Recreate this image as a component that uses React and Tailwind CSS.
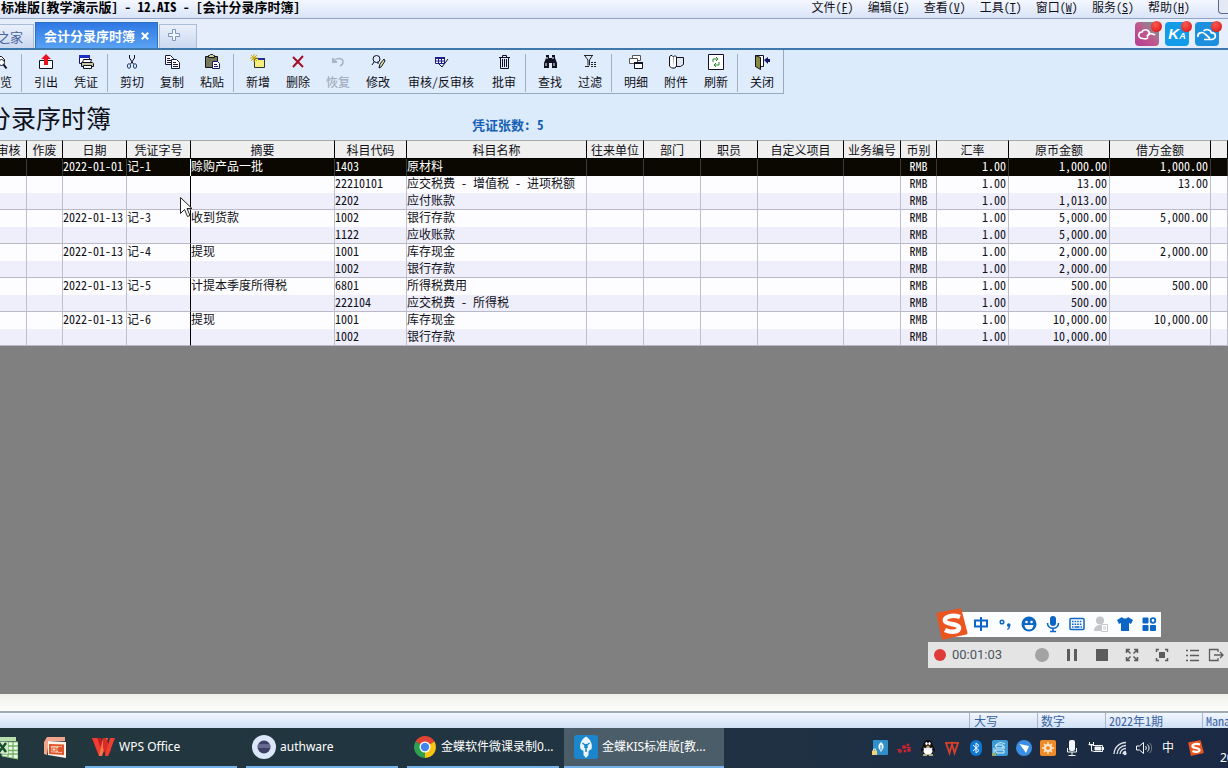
import { clsx } from 'clsx';

const menus = [
  { label: '文件', hot: 'F' },
  { label: '编辑', hot: 'E' },
  { label: '查看', hot: 'V' },
  { label: '工具', hot: 'T' },
  { label: '窗口', hot: 'W' },
  { label: '服务', hot: 'S' },
  { label: '帮助', hot: 'H' },
];

const K = '#111122';

// Toolbar glyphs, all drawn on a 16x16 grid
const glyphs = {
  preview: (
    <g fill="none" stroke={K}>
      <path d="M3.5 14.5v-12h6l3 3v2" fill="#fff" />
      <circle cx="9.5" cy="8.5" r="3" fill="#fff" />
      <path d="M11.5 10.5l3 4" strokeWidth="2" />
    </g>
  ),
  exportOut: (
    <g>
      <path d="M1.5 6.5h13v8h-13z" fill="#fff" stroke={K} />
      <path d="M8 0l5 5h-3v6H6V5H3z" fill="#e8141c" />
    </g>
  ),
  voucher: (
    <g>
      <path d="M1.5 1.5h10v8h-10z" fill="#fff" stroke="#10107a" />
      <path d="M1 1h11v3H1z" fill="#1c2fc0" />
      <path d="M5.5 5.5h8l-1 3h-8z" fill="#fff" stroke={K} />
      <path d="M3.5 8.5h11l1 1v3h-12z" fill="#c9c9a0" stroke={K} />
      <path d="M5.5 11.5h8v3h-8z" fill="#fff" stroke={K} />
    </g>
  ),
  cut: (
    <g fill="none" stroke="#1d3a6e">
      <path d="M5.5 1v3l4 6M10.5 1v3l-4 6" stroke={K} />
      <ellipse cx="5" cy="12" rx="1.6" ry="2.3" />
      <ellipse cx="11" cy="12" rx="1.6" ry="2.3" />
    </g>
  ),
  copy: (
    <g fill="#fff" stroke="#1a1a40">
      <path d="M1.5 1.5h5l3 3v6h-8z" />
      <path d="M3 4.5h3M3 6.5h4M3 8.5h4" />
      <path d="M7.5 5.5h5l3 3v6h-8z" />
      <path d="M9 8.5h3M9 10.5h5M9 12.5h5" />
    </g>
  ),
  paste: (
    <g stroke={K}>
      <path d="M1.5 2.5h12v11h-12z" fill="#77775a" />
      <path d="M4.5 3.5v-2h1l1-1h2l1 1h1v2z" fill="#d8d68a" />
      <path d="M8.5 7.5h5l2 2v5h-7z" fill="#fff" stroke="#1a1a60" />
      <path d="M10 10.5h3M10 12.5h4" stroke="#1a1a60" />
    </g>
  ),
  add: (
    <g>
      <path d="M4.5 4.5h10v9h-10z" fill="#f6ee7a" stroke="#333" />
      <path d="M8 4h7v2H8z" fill="#1c2f9a" />
      <path d="M4 0v8M0 4h8M1 1l6 6M7 1L1 7" stroke="#c9a900" />
    </g>
  ),
  remove: <path d="M3 3l10 10M13 2L3 13" stroke="#a01028" strokeWidth="2" />,
  undo: (
    <g fill="none" stroke="#a9b4c0">
      <path d="M3 4v4h4" strokeWidth="2" />
      <path d="M4 7c3-4 9-3 9 1 0 2-1 3-3 4" strokeWidth="1.5" />
    </g>
  ),
  edit: (
    <g fill="none" stroke={K}>
      <circle cx="6.5" cy="5" r="3.5" />
      <path d="M4 8l-2 3M8 8v2" />
      <path d="M9 14l1-4 4-5 1 2-4 6z" fill="#e8e4a0" />
    </g>
  ),
  audit: (
    <g>
      <path d="M2.5 3.5h9v6h-9z" fill="#fff" stroke="#1c1c8a" />
      <path d="M2 4h10" stroke="#1c1c8a" strokeWidth="2" />
      <path d="M2 7h10M5.5 4v6M8.5 4v6" stroke="#1c1c8a" />
      <path d="M6 10l3 3 6-8" stroke={K} fill="none" />
    </g>
  ),
  trash: (
    <g fill="none" stroke={K}>
      <path d="M3 3.5h11M6.5 3v-1.5h4V3M4.500 4v10.500h8V4" />
      <path d="M6.5 5v8M8.5 5v8M10.5 5v8" />
    </g>
  ),
  find: (
    <g fill={K}>
      <path d="M4 1h3v3h3V1h3v3l2 5v5h-5V9H7v5H2V9l2-5z" />
      <path d="M4 9v3M12 9v3M5 3v2M11 3v2" stroke="#fff" />
    </g>
  ),
  filter: (
    <g fill="none" stroke="#222">
      <path d="M2 1.5h9M3 2l3 4v5.500M10 2L7.500 6v5.500M3 12.500h4" />
      <path d="M9 8.5h6M9 10.5h6M9 12.5h6" strokeDasharray="2 1" />
    </g>
  ),
  detail: (
    <g stroke={K} fill="#fff">
      <path d="M4.5 1.5h8v5h-8z" stroke="#555" />
      <path d="M1.5 4.5h8v5h-8z" stroke="#555" />
      <path d="M6.5 8.5h8v6h-8z" />
      <path d="M6 9h9" strokeWidth="2" />
    </g>
  ),
  attach: (
    <g fill="none" stroke={K}>
      <path d="M5 3.5h10.500v7l-3 2H6" fill="#dfe6ee" />
      <path d="M1.5 3v9l2 2h2V3L4 1.500H2.500z" fill="#fff" />
      <path d="M5.500 3l1.500-1.500L8.500 3v9l-1.500 2h-2" fill="#fff" />
    </g>
  ),
  refresh: (
    <g fill="none">
      <path d="M.5.5h15v15H.5z" fill="#fff" stroke={K} />
      <path d="M5 8V5h5M8 3l2 2-2 2M11 8v3H6M8 9l-2 2 2 2" stroke="#2b8a2b" />
    </g>
  ),
  close: (
    <g>
      <path d="M1.5 1.5h8v11h-8z" fill="#fff" stroke={K} />
      <path d="M1.5 1.5l5 2v12l-5-3z" fill="#8a8a3c" stroke={K} />
      <path d="M10 6l4-3v2h2v3h-2v2z" fill="#14146e" />
    </g>
  ),
};

const toolGroups = [
  [{ label: '预览', icon: 'preview' }],
  [
    { label: '引出', icon: 'exportOut' },
    { label: '凭证', icon: 'voucher' },
  ],
  [
    { label: '剪切', icon: 'cut' },
    { label: '复制', icon: 'copy' },
    { label: '粘贴', icon: 'paste' },
  ],
  [
    { label: '新增', icon: 'add' },
    { label: '删除', icon: 'remove' },
    { label: '恢复', icon: 'undo', disabled: true },
    { label: '修改', icon: 'edit' },
    { label: '审核/反审核', icon: 'audit', wide: true },
    { label: '批审', icon: 'trash' },
  ],
  [
    { label: '查找', icon: 'find' },
    { label: '过滤', icon: 'filter' },
  ],
  [
    { label: '明细', icon: 'detail' },
    { label: '附件', icon: 'attach' },
    { label: '刷新', icon: 'refresh' },
  ],
  [{ label: '关闭', icon: 'close' }],
];

const columns = [
  { key: 'audit', label: '审核', width: 'w-9' },
  { key: 'void', label: '作废', width: 'w-9' },
  { key: 'date', label: '日期', width: 'w-16' },
  { key: 'no', label: '凭证字号', width: 'w-16' },
  { key: 'memo', label: '摘要', width: 'w-36' },
  { key: 'code', label: '科目代码', width: 'w-18' },
  { key: 'name', label: '科目名称', width: 'w-45' },
  { key: 'partner', label: '往来单位', width: 'w-[57px]' },
  { key: 'dept', label: '部门', width: 'w-[57px]' },
  { key: 'staff', label: '职员', width: 'w-[57px]' },
  { key: 'custom', label: '自定义项目', width: 'w-[86px]' },
  { key: 'biz', label: '业务编号', width: 'w-[57px]' },
  { key: 'currency', label: '币别', width: 'w-9', align: 'text-center' },
  { key: 'rate', label: '汇率', width: 'w-18', align: 'text-right' },
  { key: 'amount', label: '原币金额', width: 'w-[101px]', align: 'text-right' },
  { key: 'debit', label: '借方金额', width: 'w-[101px]', align: 'text-right' },
  { key: 'credit', label: '', width: '' },
];

const entries = [
  { date: '2022-01-01', no: '记-1', memo: '赊购产品一批', code: '1403', name: '原材料', amount: '1,000.00', debit: '1,000.00', selected: true },
  { code: '22210101', name: '应交税费 - 增值税 - 进项税额', amount: '13.00', debit: '13.00' },
  { code: '2202', name: '应付账款', amount: '1,013.00', last: true },
  { date: '2022-01-13', no: '记-3', memo: '收到货款', code: '1002', name: '银行存款', amount: '5,000.00', debit: '5,000.00' },
  { code: '1122', name: '应收账款', amount: '5,000.00', last: true },
  { date: '2022-01-13', no: '记-4', memo: '提现', code: '1001', name: '库存现金', amount: '2,000.00', debit: '2,000.00' },
  { code: '1002', name: '银行存款', amount: '2,000.00', last: true },
  { date: '2022-01-13', no: '记-5', memo: '计提本季度所得税', code: '6801', name: '所得税费用', amount: '500.00', debit: '500.00' },
  { code: '222104', name: '应交税费 - 所得税', amount: '500.00', last: true },
  { date: '2022-01-13', no: '记-6', memo: '提现', code: '1001', name: '库存现金', amount: '10,000.00', debit: '10,000.00' },
  { code: '1002', name: '银行存款', amount: '10,000.00', last: true },
].map((row) => ({ currency: 'RMB', rate: '1.00', ...row }));

const MenuBar = () => (
  <header className="flex h-[18px] items-start justify-between bg-gradient-to-b from-[#f4f7fe] to-[#d9e4f8]">
    <h1 className="whitespace-nowrap pl-px text-[13px] leading-[14px] font-bold text-black">
      标准版[教学演示版] - 12.AIS - [会计分录序时簿]
    </h1>
    <div className="flex items-start">
      <nav className="flex gap-3.5">
        {menus.map((m) => (
          <button key={m.hot} type="button" className="whitespace-nowrap leading-[14px]">
            {m.label}(<span className="underline">{m.hot}</span>)
          </button>
        ))}
      </nav>
      <button
        type="button"
        aria-label="最小化"
        className="ml-7 h-3.5 w-2.5 rounded-bl border-b border-l border-[#5a6a8a] bg-[#e4e9f3]"
      />
    </div>
  </header>
);

const RedDot = () => (
  <span className="absolute -top-px -right-[3px] size-[11px] rounded-full bg-radial-[at_40%_30%] from-[#ff5a50] to-[#cf0f14]" />
);

const TabStrip = () => (
  <div className="flex h-8 items-end justify-between border-t border-b-2 border-t-[#8fa3c4] border-b-[#3f78ad] bg-[#e6eefb]">
    <div className="flex items-end">
      <button
        type="button"
        className="flex h-6 w-[34px] items-center justify-end border-t border-r border-[#a9bcd8] bg-gradient-to-b from-[#eaf0fb] to-[#cbd8f0] pr-2.5 text-[13px] whitespace-nowrap text-[#48649c]"
      >
        之家
      </button>
      <div className="ml-px flex h-[26px] w-[123px] items-center justify-between border border-b-0 border-[#2f6fc0] bg-gradient-to-b from-[#2f78e4] to-[#5aa2f2] pr-2 pl-2 text-white">
        <button type="button" className="whitespace-nowrap text-[13px] font-bold">会计分录序时簿</button>
        <button type="button" aria-label="关闭标签">
          <svg viewBox="0 0 10 10" className="size-2" stroke="#fff" strokeWidth="2.400">
            <path d="M1 1l8 8M9 1L1 9" />
          </svg>
        </button>
      </div>
      <button
        type="button"
        aria-label="新标签"
        className="ml-px flex h-6 w-[38px] items-center border border-b-0 border-[#a9bcd8] bg-gradient-to-b from-[#eaf0fb] to-[#cbd8f0] pb-1 pl-2"
      >
        <svg viewBox="0 0 12 12" className="size-3" fill="#f4f7fd" stroke="#7b95bd">
          <path d="M4.5.5h3v4h4v3h-4v4h-3v-4h-4v-3h4z" />
        </svg>
      </button>
    </div>
    <div className="flex gap-1.5 self-center pr-[9px]">
      <button type="button" aria-label="云社区" className="relative size-6 rounded bg-gradient-to-tr from-[#b23c92] via-[#c0588e] to-[#3d9a90]">
        <svg viewBox="0 0 24 24" className="size-6" fill="none" stroke="#fff" strokeWidth="1.700">
          <path d="M13 15.500c-1 1.500-3 1.500-5 1-3 0-5-2-4-4 0-2 2-2.500 3-2.500 1-3 6-3 7 0 1 2-1 4-2 5M12 14c2-3 5-3 8-1" />
        </svg>
        <RedDot />
      </button>
      <button
        type="button"
        className="relative flex size-6 items-center justify-center rounded bg-[#129be6] font-['Liberation_Sans',sans-serif] text-[15px] font-bold text-white italic [font-feature-settings:normal]"
      >
        K<span className="pt-1 text-[9px]">A</span>
        <RedDot />
      </button>
      <button type="button" aria-label="云服务" className="relative size-6 rounded bg-[#1c90dc]">
        <svg viewBox="0 0 24 24" className="size-6" fill="none" stroke="#fff" strokeWidth="1.700">
          <path d="M3 15c-1-4 4-6 7-3l5 4.500M9 17.500h8c5-1 4-7-.5-6.500-1-4-6-4-8-2" />
        </svg>
        <RedDot />
      </button>
    </div>
  </div>
);

const Toolbar = () => (
  <div className="flex">
    <div className="-ml-5 flex h-11 border-r border-b border-[#97a9bd] bg-[#dfecfb] pr-px">
      {toolGroups.map((group, i) => (
        <div key={group[0].label} className="flex">
          {i > 0 && <span className="mt-1 mr-1 mb-px ml-px w-px bg-[#9fb0c4]" />}
          {group.map((tool) => (
            <button
              key={tool.label}
              type="button"
              disabled={tool.disabled}
              className={clsx(
                'flex flex-col items-center gap-1 whitespace-nowrap pt-1',
                tool.wide ? 'w-[86px]' : 'w-10',
                tool.disabled && 'text-[#9aa6b4]'
              )}
            >
              <svg viewBox="0 0 16 16" className="size-4">{glyphs[tool.icon]}</svg>
              <span className="leading-4">{tool.label}</span>
            </button>
          ))}
        </div>
      ))}
    </div>
  </div>
);

const EntryTable = () => (
  <div className="relative">
    <div className="-ml-[9px]">
      <table className="w-full table-fixed border-separate border-spacing-0">
        <thead>
          <tr>
            {columns.map((col) => (
              <th
                key={col.key}
                scope="col"
                className={clsx(
                  'h-[19px] border-t border-r border-b border-t-[#a9a9a9] border-r-black border-b-black bg-[#efefef] p-0 leading-4 font-normal whitespace-nowrap',
                  col.width
                )}
              >
                {col.label}
              </th>
            ))}
          </tr>
        </thead>
        <tbody>
          {entries.map((row, i) => (
            <tr
              key={i}
              className={row.selected ? 'bg-[#0a0800] text-white' : row.last ? 'bg-[#efeffc]' : 'bg-[#fdfdff]'}
            >
              {columns.map((col) => (
                <td
                  key={col.key}
                  className={clsx(
                    'h-[17px] border-r p-0 align-top leading-[14px] whitespace-nowrap',
                    col.align === 'text-right' && 'pr-0.5',
                    col.align,
                    row.last && 'border-b border-b-[#b9b9c9]',
                    col.key === 'no'
                      ? row.selected ? 'border-r-white' : 'border-r-black'
                      : row.selected ? 'border-r-[#3a3a34]' : 'border-r-[#c0c0cc]'
                  )}
                >
                  {row[col.key]}
                </td>
              ))}
            </tr>
          ))}
        </tbody>
      </table>
    </div>
    <svg viewBox="0 0 12 21" className="absolute top-[57px] left-[180px] h-[21px] w-3">
      <path d="M.5.5v16l4-4 3 7 2.500-1-3-7h5z" fill="#fff" stroke="#222" />
    </svg>
  </div>
);

const imeKeys = [
  { label: '中文', art: <path d="M3 5.500h12v6H3zM9 2v14" fill="none" stroke="#0c66c6" strokeWidth="2" /> },
  {
    label: '标点',
    art: (
      <g>
        <circle cx="6" cy="7" r="1.800" fill="none" stroke="#0c66c6" strokeWidth="1.500" />
        <path d="M11 10a1.800 1.800 0 1 1 3 1.500c0 2-1 3-2.500 3.500l-.5-1c1-.5 1.500-1 1.500-2-1 0-1.500-1-1.500-2z" fill="#0c66c6" />
      </g>
    ),
  },
  {
    label: '表情',
    art: (
      <g>
        <circle cx="9" cy="9" r="7.500" fill="#0c66c6" />
        <circle cx="6.500" cy="7" r="1.300" fill="#fff" />
        <circle cx="11.500" cy="7" r="1.300" fill="#fff" />
        <path d="M4.500 10h9a4.500 4.500 0 0 1-9 0z" fill="#fff" />
      </g>
    ),
  },
  {
    label: '语音',
    art: (
      <g>
        <rect x="6" y="1" width="6" height="10" rx="3" fill="#0c66c6" />
        <path d="M3.500 8c0 7 11 7 11 0M9 13v3.500M6 16.500h6" fill="none" stroke="#0c66c6" strokeWidth="1.600" />
      </g>
    ),
  },
  {
    label: '软键盘',
    art: (
      <g>
        <rect x="2" y="3.500" width="14" height="11" rx="1" fill="#fff" stroke="#0c66c6" strokeWidth="1.500" />
        <path d="M4 6.500h10M4 9.200h10" stroke="#0c66c6" strokeWidth="1.500" strokeDasharray="1.600 1" />
        <path d="M4 12h1.500M6.500 12h5M12.500 12H14" stroke="#0c66c6" strokeWidth="1.500" />
      </g>
    ),
  },
  {
    label: '用户',
    art: (
      <g fill="#c4c6ca">
        <circle cx="8" cy="5.500" r="4" />
        <path d="M2 16c0-8 12-8 12 0z" />
        <path d="M9.500 9.500h6v7h-6z" fill="#fff" stroke="#c4c6ca" />
        <path d="M11 12h3M11 14h3" stroke="#c4c6ca" />
      </g>
    ),
  },
  { label: '皮肤', art: <path d="M1 5l5-3c1 2 5 2 6 0l5 3-2 4-2-1v8H5V8L3 9z" fill="#0c66c6" /> },
  {
    label: '工具箱',
    art: (
      <g fill="#0c66c6">
        <rect x="2.500" y="2.500" width="6" height="6" rx="1" />
        <circle cx="13" cy="5.500" r="2.300" fill="none" stroke="#0c66c6" strokeWidth="1.800" />
        <rect x="2.500" y="10" width="6" height="6" rx="1" />
        <rect x="10" y="10" width="6" height="6" rx="1" />
      </g>
    ),
  },
];

const SogouMark = ({ className }) => (
  <svg viewBox="0 0 32 32" className={className}>
    <path d="M2 6L24 2l6 23-23 5z" fill="#ea5520" stroke="#ea5520" strokeWidth="3" strokeLinejoin="round" />
    <path d="M24 9C16 6 8 9 9 13c1 4 14 2 14 7 0 4-8 5-14 2" fill="none" stroke="#fff" strokeWidth="4.500" />
  </svg>
);

const ImeBar = () => (
  <div className="flex items-center">
    <SogouMark className="z-10 -mr-5 size-8" />
    <div className="flex h-[25px] items-center gap-1.5 bg-[#fcfdff] pr-[3px] pl-6">
      {imeKeys.map((k) => (
        <button key={k.label} type="button" aria-label={k.label}>
          <svg viewBox="0 0 18 18" className="size-[18px]">{k.art}</svg>
        </button>
      ))}
    </div>
  </div>
);

const recorderKeys = [
  { label: '录制', art: <circle cx="8" cy="8" r="7" fill="#a3a3a3" /> },
  { label: '暂停', art: <path d="M3 2h3v12H3zM10 2h3v12h-3z" fill="#5c5c5c" /> },
  { label: '停止', art: <path d="M2 2h12v12H2z" fill="#5c5c5c" /> },
  {
    label: '全屏',
    art: (
      <path
        d="M2.500 6V2.500H6M10 2.500h3.500V6M13.500 10v3.500H10M6 13.500H2.500V10M3 3l3.500 3.500M13 3L9.500 6.500M13 13L9.500 9.500M3 13l3.500-3.500"
        fill="none"
        stroke="#5c5c5c"
        strokeWidth="1.500"
      />
    ),
  },
  {
    label: '区域',
    art: (
      <g>
        <path d="M2.500 5V2.500H5M11 2.500h2.500V5M13.500 11v2.500H11M5 13.500H2.500V11" fill="none" stroke="#5c5c5c" strokeWidth="1.500" />
        <path d="M5 5h6v6H5z" fill="#5c5c5c" />
      </g>
    ),
  },
  { label: '列表', art: <path d="M2 3.500h2M6 3.500h9M2 8.500h2M6 8.500h9M2 13.500h2M6 13.500h9" stroke="#5c5c5c" strokeWidth="1.500" /> },
];

const Recorder = () => (
  <div className="flex h-[26px] w-[300px] items-center bg-[#e4e4e4] pl-1.5">
    <span className="size-3 rounded-full bg-[#dd3a38]" />
    <time className="ml-1.5 w-[76px] font-['Roboto',sans-serif] text-[13px] text-[#4b545e] [font-feature-settings:normal]">00:01:03</time>
    <div className="ml-1.5 flex items-center gap-3.5">
      {recorderKeys.map((k) => (
        <button key={k.label} type="button" aria-label={k.label}>
          <svg viewBox="0 0 16 16" className="size-4">{k.art}</svg>
        </button>
      ))}
    </div>
    <button type="button" aria-label="退出" className="ml-2">
      <svg viewBox="0 0 16 16" className="size-4" fill="none" stroke="#5c5c5c" strokeWidth="1.300">
        <path d="M10 5V2.500H1.500v11H10V11M6 8h9M12 5l3 3-3 3" />
      </svg>
    </button>
  </div>
);

const StatusBar = () => (
  <div>
    <div className="h-[17px] bg-gradient-to-b from-[#efefeb] to-[#fdfdfb]" />
    <footer className="flex h-[17px] justify-end overflow-hidden border-t-2 border-[#9fabb0] bg-gradient-to-b from-[#f2f6fe] to-[#d0e0f5] text-[#3a63a0]">
      <span className="w-17 border-l border-[#a5b7d0] pl-1 leading-4">大写</span>
      <span className="w-17 border-l border-[#a5b7d0] pl-[3px] leading-4">数字</span>
      <span className="w-[97px] border-l border-[#a5b7d0] pl-[3px] leading-4">2022年1期</span>
      <span className="w-[26px] border-l border-[#a5b7d0] pl-[3px] leading-4">Mana</span>
    </footer>
  </div>
);

const WpsMark = ({ className }) => (
  <svg viewBox="0 0 24 24" className={className}>
    <path d="M1 3h9l4 10-3 8H8z" fill="#c51d1f" />
    <path d="M1 3h5l5 13-2 5H8z" fill="#ef3e33" />
    <path d="M12 3h5l-6 18H8z" fill="#f47a45" />
    <path d="M12 3h3l5 12-3 6h-2l-3-8z" fill="#d92a25" />
    <path d="M19 3h5l-7 18h-3z" fill="#ef3e33" />
  </svg>
);

const KisMark = ({ className }) => (
  <svg viewBox="0 0 24 24" className={className}>
    <rect width="24" height="24" rx="3" fill="#1c86cc" />
    <path d="M12 1.500c-4 2.500-7 7-5.500 12.500l3 2v4l2.500 3 2.500-3v-4l3-2C19 8.500 16 4 12 1.500z" fill="#eaf5fd" />
    <path d="M12 9v8M8.500 8l2.500 2v3M15.500 8L13 10v3" stroke="#1c86cc" fill="none" strokeWidth="1.500" />
  </svg>
);

const tasks = [
  { label: 'WPS Office', art: <WpsMark className="size-6" /> },
  {
    label: 'authware',
    art: (
      <svg viewBox="0 0 24 24" className="size-6">
        <circle cx="12" cy="12" r="12" fill="#dbe7f8" />
        <circle cx="12" cy="12" r="6.500" fill="#3c3f66" />
        <path d="M6 10h12M6 12h12" stroke="#8f94bd" />
      </svg>
    ),
  },
  {
    label: '金蝶软件微课录制0...',
    art: (
      <svg viewBox="0 0 24 24" className="size-6">
        <path d="M12 12L2.500 6.500a11 11 0 0 1 19 0z" fill="#e24335" />
        <path d="M12 12l9.500-5.500A11 11 0 0 1 12 23z" fill="#f9c513" />
        <path d="M12 12v11A11 11 0 0 1 2.500 6.500z" fill="#2ea04f" />
        <path d="M12 6.500h9.500" stroke="#e24335" />
        <circle cx="12" cy="12" r="5.500" fill="#fff" />
        <circle cx="12" cy="12" r="4.200" fill="#4285e8" />
      </svg>
    ),
  },
  { label: '金蝶KIS标准版[教...', art: <KisMark className="size-6" />, active: true },
];

const tray = [
  {
    label: 'KIS',
    art: (
      <g>
        <rect x="1" width="15" height="15" rx="1" fill="#2f8fc9" />
        <path d="M9 2C7 3.500 6 5 6.500 8L9 12l2.500-4C12 5 11 3.500 9 2z" fill="#eaf5fd" />
        <path d="M9 5v5" stroke="#2f8fc9" />
        <path d="M0 10.500h5V15H0z" fill="#f0d27a" />
        <path d="M1.500 10.500V9h2v1.500" stroke="#f4ecd0" fill="none" />
      </g>
    ),
  },
  {
    label: '录屏',
    art: (
      <g fill="#c22434">
        <circle cx="4" cy="11" r="2" />
        <circle cx="8" cy="7" r="2" />
        <circle cx="12" cy="5" r="1.500" />
        <circle cx="9" cy="11" r="1.500" />
        <circle cx="13" cy="10" r="2" />
        <path d="M1 9h4v1H1zM10 7h5v1h-5z" />
      </g>
    ),
  },
  {
    label: 'QQ',
    art: (
      <g>
        <path d="M8 0c3 0 4.500 2 4.500 5 1.500 2 3 4.500 2.500 6.500l-2-1V15H3v-4.500l-2 1C.5 9.500 2 7 3.500 5 3.500 2 5 0 8 0z" fill="#0c0c10" />
        <ellipse cx="8" cy="11" rx="4.500" ry="3.800" fill="#fff" />
        <ellipse cx="6.500" cy="3.500" rx="1.200" ry="1.500" fill="#fff" />
        <ellipse cx="9.500" cy="3.500" rx="1.200" ry="1.500" fill="#fff" />
        <path d="M5 5.800h6L8 7.300z" fill="#f5a623" />
        <path d="M3.500 8c3 1.500 6 1.500 9 0" stroke="#e8e8f0" strokeWidth="1.300" fill="none" />
        <path d="M3 15h4M9 15h4" stroke="#e8d8a0" strokeWidth="1.500" />
      </g>
    ),
  },
  { label: 'WPS', art: <path d="M1 2.800h14M2 3l3.500 10L8 4l2.500 9L14 3" fill="none" stroke="#d9402c" strokeWidth="1.800" /> },
  {
    label: '蓝牙',
    art: (
      <g>
        <rect x="2" width="12" height="16" rx="6" fill="#0f78d4" />
        <path d="M5 5l6 5.500L8 13V3l3 2.500L5 11" fill="none" stroke="#fff" />
      </g>
    ),
  },
  {
    label: '网络助手',
    art: (
      <g>
        <rect width="16" height="16" rx="2" fill="#3b9ad6" />
        <path d="M3 6c3-4 7-4 10-2M4 5h7v3H4zM3 10h9v3H5zM12 6v3M2 8v5" fill="none" stroke="#dff3fc" />
        <path d="M0 13h4v3H0z" fill="#8fb06a" />
      </g>
    ),
  },
  {
    label: '钉钉',
    art: (
      <g>
        <circle cx="8" cy="8" r="8" fill="#3a8fe4" />
        <path d="M3.500 4l9.500 2-3 7-2-3z" fill="#fff" />
      </g>
    ),
  },
  {
    label: '设置',
    art: (
      <g>
        <rect width="16" height="16" rx="2" fill="#f08a24" />
        <circle cx="8" cy="8" r="3" fill="none" stroke="#fbe6cf" strokeWidth="2" />
        <path d="M8 2v2.500M8 11.500V14M2 8h2.500M11.500 8H14M4 4l1.500 1.500M10.500 10.500L12 12M12 4l-1.500 1.500M5.500 10.500L4 12" stroke="#fbe6cf" strokeWidth="1.500" />
      </g>
    ),
  },
  {
    label: '麦克风',
    art: (
      <g>
        <rect x="5" width="6" height="11" rx="2" fill="#f2f5f8" />
        <path d="M3.500 8v4h9V8M8 12v3M4.500 15.500h7" fill="none" stroke="#f2f5f8" />
      </g>
    ),
  },
  {
    label: '电源',
    art: (
      <g fill="none" stroke="#f2f5f8">
        <path d="M5 5.500h9.500v6h-9M15.500 7v3" />
        <path d="M7 7h6v3H7z" fill="#f2f5f8" />
        <path d="M1.500 2v3h4V2M.5 4.500h5M3.500 5v6h2" />
      </g>
    ),
  },
  {
    label: '无线网络',
    art: (
      <g fill="none" stroke="#dfe5ea" strokeWidth="1.300">
        <path d="M2 14A12 12 0 0 1 14 2.500M5 14a9 9 0 0 1 9-8.500M8 14a6 6 0 0 1 6-5.500M11 14a3 3 0 0 1 3-2.500" />
        <circle cx="13" cy="13.500" r="1" fill="#fff" />
      </g>
    ),
  },
  {
    label: '音量',
    art: (
      <g fill="none" stroke="#f2f5f8">
        <path d="M.5 6h3L7.500 2.500v11L3.500 10h-3z" />
        <path d="M9.500 6c1 1 1 3 0 4M11.500 4.500c2 2 2 5 0 7" />
        <path d="M13.500 3c3 3 3 7 0 10" stroke="#7b8894" />
      </g>
    ),
  },
];

const TaskBar = () => (
  <div className="flex h-10 items-stretch justify-between overflow-hidden bg-gradient-to-r from-[#22373d] via-[#203442] to-[#1b2945] font-['Noto_Sans','Noto_Sans_CJK_SC',sans-serif] text-xs text-white">
    <div className="flex items-stretch">
      <button type="button" aria-label="Excel" className="flex w-[18px] items-center justify-end">
        <svg viewBox="0 0 24 24" className="size-6 shrink-0">
          <path d="M3 1h19v4H3z" fill="#b9dfb0" />
          <path d="M8 6h16v17l-16-3z" fill="#eef8ea" stroke="#8cc47e" />
          <path d="M8 10h16M8 14.500h16M8 18h16M14 6v15M19 6v16" stroke="#6fb062" strokeWidth="1.300" />
          <path d="M1 5l13 1v12L1 17z" fill="#cfe8c8" />
          <path d="M5 7l7 9M12 7l-7 9" stroke="#164d2a" strokeWidth="2.500" />
        </svg>
      </button>
      <button type="button" aria-label="PowerPoint" className="ml-[25px] flex items-center">
        <svg viewBox="0 0 24 24" className="size-6">
          <path d="M4 1h18v4H6l-2 14-3-1V6z" fill="#f3a48c" />
          <path d="M5 5l18 1v16l-18-3z" fill="#fdf1ea" />
          <path d="M7 9l13 .5v8.500L7 17z" fill="#fbe0d2" stroke="#e0552a" strokeWidth="2" />
          <path d="M9 12h4v3H9z" fill="none" stroke="#e0552a" strokeWidth="1.200" />
          <circle cx="17" cy="13.500" r="2.800" fill="#e0552a" />
        </svg>
      </button>
      <div className="ml-[18px] flex items-stretch gap-[9px]">
        {tasks.map((t) => (
          <button
            key={t.label}
            type="button"
            className={clsx(
              'flex items-center gap-1 border-b-2 border-[#74b3ea] whitespace-nowrap',
              t.active ? '-ml-1 w-40 bg-[#4b5d68] pl-2.5' : 'w-[152px] pl-1.5'
            )}
          >
            {t.art}
            {t.label}
          </button>
        ))}
      </div>
    </div>
    <div className="flex items-center gap-2">
      {tray.map((t) => (
        <button key={t.label} type="button" aria-label={t.label}>
          <svg viewBox="0 0 16 16" className="size-4">{t.art}</svg>
        </button>
      ))}
      <button type="button" className="w-4 text-xs">中</button>
      <button type="button" aria-label="搜狗输入法" className="ml-1">
        <SogouMark className="size-4" />
      </button>
      <span className="ml-2 w-2 self-end text-xs leading-5">20</span>
    </div>
  </div>
);

const App = () => (
  <div className="flex min-h-screen flex-col overflow-hidden bg-[#dcebfc] font-['Noto_Sans_CJK_SC',sans-serif] text-xs text-[#101018]">
    <div className="flex flex-1 flex-col [font-feature-settings:'hwid']">
      <MenuBar />
      <TabStrip />
      <Toolbar />
      <div className="flex h-[46px] items-center">
        <h2 className="-ml-[14px] w-[486px] text-[25px] leading-8 whitespace-nowrap">分录序时簿</h2>
        <p className="pt-4 text-[13px] leading-4 font-bold text-[#1560b4]">凭证张数: 5</p>
      </div>
      <EntryTable />
      <main className="relative flex-1 bg-[#808080]">
        <div className="absolute right-0 bottom-[26px] flex flex-col items-start gap-0.5">
          <div className="ml-2">
            <ImeBar />
          </div>
          <Recorder />
        </div>
      </main>
      <StatusBar />
    </div>
    <TaskBar />
  </div>
);

export default App;
